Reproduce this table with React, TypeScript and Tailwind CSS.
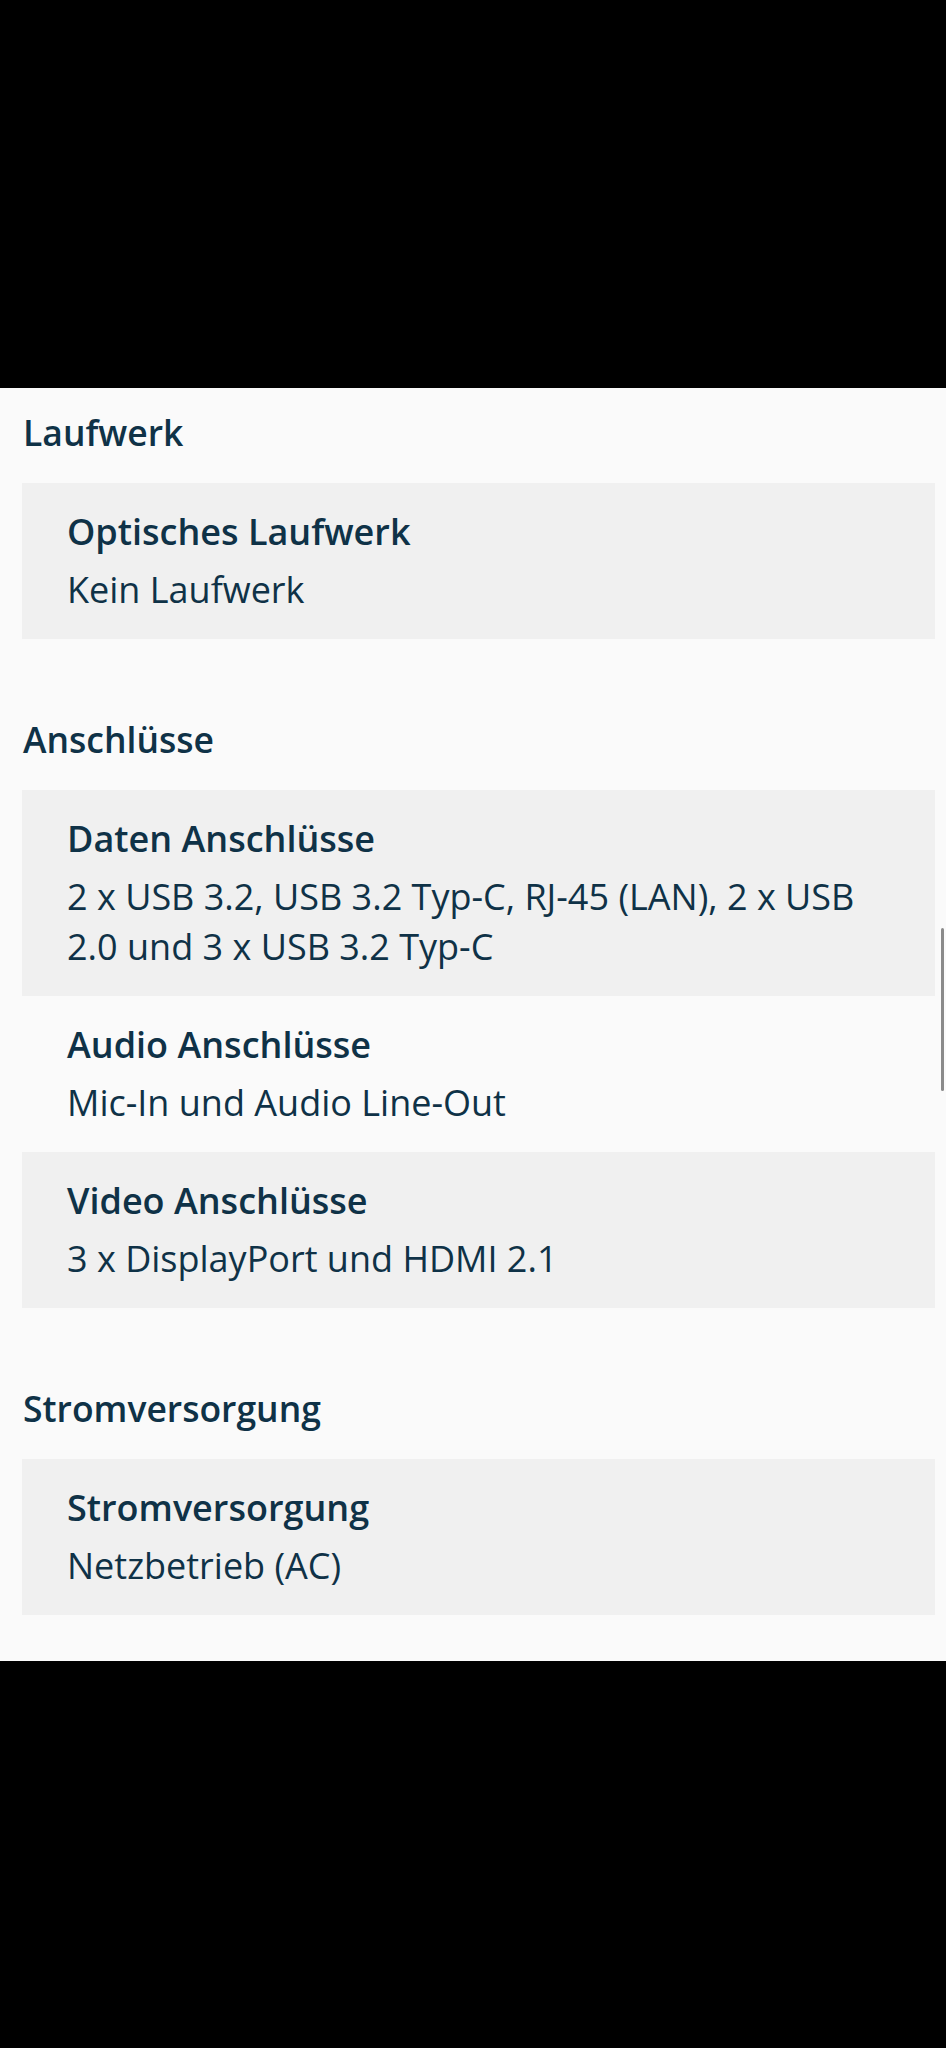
import React from 'react';

interface Spec {
    label: string;
    value: string;
}

interface Section {
    title: string;
    rows: Spec[];
}

const sections: Section[] = [
    {
        title: 'Laufwerk',
        rows: [{ label: 'Optisches Laufwerk', value: 'Kein Laufwerk' }],
    },
    {
        title: 'Anschlüsse',
        rows: [
            { label: 'Daten Anschlüsse', value: '2 x USB 3.2, USB 3.2 Typ-C, RJ-45 (LAN), 2 x USB 2.0 und 3 x USB 3.2 Typ-C' },
            { label: 'Audio Anschlüsse', value: 'Mic-In und Audio Line-Out' },
            { label: 'Video Anschlüsse', value: '3 x DisplayPort und HDMI 2.1' },
        ],
    },
    {
        title: 'Stromversorgung',
        rows: [{ label: 'Stromversorgung', value: 'Netzbetrieb (AC)' }],
    },
];

const SpecRow = ({ spec, striped }: { spec: Spec; striped: boolean }) => (
    <div className={`pl-[45px] pr-[50px] pt-6 pb-6 ${striped ? 'bg-[#f0f0f0]' : ''}`}>
        <div className="text-[36px] leading-[50px] font-semibold">{spec.label}</div>
        <div className="mt-2 text-[36px] leading-[50px] font-normal">{spec.value}</div>
    </div>
);

export default function App() {
    return (
        <div
            className="relative w-[946px] h-[2048px] flex flex-col bg-black text-[#0f3247]"
            style={{ fontFamily: '"Open Sans", "Noto Sans", sans-serif' }}
        >
            <div className="h-[388px] shrink-0 bg-black" />
            <div className="bg-[#fafafa] pl-[22px] pr-[11px] pt-[19px] pb-[46px]">
                {sections.map((section, i) => (
                    <div key={section.title} className={i > 0 ? 'mt-[75px]' : ''}>
                        <h2 className="pl-px text-[35.5px] leading-[50px] font-semibold">{section.title}</h2>
                        <div className="mt-[26px]">
                            {section.rows.map((row, j) => (
                                <SpecRow key={row.label} spec={row} striped={j % 2 === 0} />
                            ))}
                        </div>
                    </div>
                ))}
            </div>
            <div className="flex-1 bg-black" />
            {/* scroll indicator */}
            <div className="absolute left-[941px] top-[928px] w-[3px] h-[163px] rounded-full bg-[#8a8a8a]" />
        </div>
    );
}
